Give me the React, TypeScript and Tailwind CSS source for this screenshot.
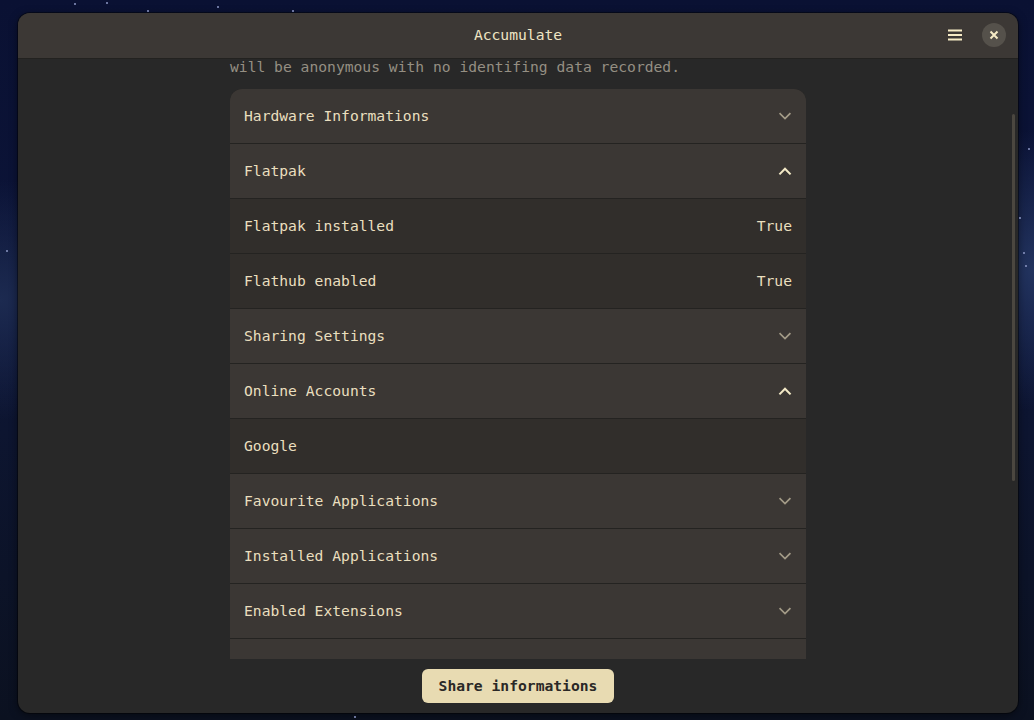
import React from 'react';

const mono = { fontFamily: '"DejaVu Sans Mono", "Liberation Mono", monospace' };

type Row =
  | { kind: 'group'; label: string; open: boolean }
  | { kind: 'item'; label: string; value?: string };

const rows: Row[] = [
  { kind: 'group', label: 'Hardware Informations', open: false },
  { kind: 'group', label: 'Flatpak', open: true },
  { kind: 'item', label: 'Flatpak installed', value: 'True' },
  { kind: 'item', label: 'Flathub enabled', value: 'True' },
  { kind: 'group', label: 'Sharing Settings', open: false },
  { kind: 'group', label: 'Online Accounts', open: true },
  { kind: 'item', label: 'Google' },
  { kind: 'group', label: 'Favourite Applications', open: false },
  { kind: 'group', label: 'Installed Applications', open: false },
  { kind: 'group', label: 'Enabled Extensions', open: false },
  { kind: 'group', label: '', open: false },
];

const stars = [
  { x: 74, y: 3 }, { x: 106, y: 2 }, { x: 147, y: 10 }, { x: 217, y: 6 }, { x: 292, y: 10 },
  { x: 1019, y: 217 }, { x: 1023, y: 252 }, { x: 1025, y: 265 }, { x: 1028, y: 148 },
  { x: 354, y: 716 }, { x: 6, y: 250 },
];

const Chevron = ({ up }: { up: boolean }) => (
  <svg width="14" height="14" viewBox="0 0 16 16" className={up ? 'text-[#f3e9c6]' : 'text-[#a39b87]'}>
    {up ? (
      <path d="M2.5 11 L8 5.5 L13.5 11" fill="none" stroke="currentColor" strokeWidth="2.4" strokeLinecap="square" />
    ) : (
      <path d="M2.5 5.5 L8 11 L13.5 5.5" fill="none" stroke="currentColor" strokeWidth="2" strokeLinecap="square" />
    )}
  </svg>
);

export default function App() {
  return (
    <div
      className="relative w-[1034px] h-[720px] overflow-hidden"
      style={{
        ...mono,
        background:
          'radial-gradient(ellipse 180px 140px at 1034px 270px, #22335e 0%, rgba(20,30,70,0) 100%), radial-gradient(ellipse 160px 120px at 0px 300px, #1c2a50 0%, rgba(20,30,70,0) 100%), linear-gradient(180deg, #0a1133 0%, #0c1438 40%, #0d1530 60%, #0b1120 100%)',
      }}
    >
      {stars.map((s, i) => (
        <div key={i} className="absolute w-[2px] h-[2px] rounded-full bg-[#8d97c4]" style={{ left: s.x, top: s.y }} />
      ))}

      <div className="p-[13px_16px_7px_18px] h-full">
        <div className="flex flex-col h-[700px] w-[1000px] rounded-[12px] overflow-hidden bg-[#282828] shadow-[0_2px_8px_rgba(0,0,0,0.5)] ring-1 ring-black/40">
          {/* header bar */}
          <div className="relative flex items-center justify-center h-[46px] shrink-0 bg-[#3c3835] border-b border-[#232220]">
            <span className="text-[14.67px] text-[#efe5c4] -mt-[2px]">Accumulate</span>
            <div className="absolute right-[12px] top-0 h-full flex items-center gap-[19px]">
              <svg width="16" height="14" viewBox="0 0 16 14" className="text-[#f6ebc6] -mt-[1px]">
                <rect x="1" y="1.5" width="14" height="2" fill="currentColor" />
                <rect x="1" y="6" width="14" height="2" fill="currentColor" />
                <rect x="1" y="10.5" width="14" height="2" fill="currentColor" />
              </svg>
              <div className="w-[24px] h-[24px] rounded-full bg-[#55514b] flex items-center justify-center -mt-[1px]">
                <svg width="10" height="10" viewBox="0 0 10 10">
                  <path d="M1.5 1.5 L8.5 8.5 M8.5 1.5 L1.5 8.5" stroke="#f6ebc6" strokeWidth="2" />
                </svg>
              </div>
            </div>
          </div>

          {/* scrolled content */}
          <div className="relative flex-1 overflow-hidden">
            <div className="w-[576px] mx-auto -mt-[2px]">
              <p className="text-[14.67px] leading-[20px] text-[#958f83] mb-[12px]">
                will be anonymous with no identifing data recorded.
              </p>
              <div className="rounded-t-[12px] overflow-hidden bg-[#242321] flex flex-col gap-px">
                {rows.map((r, i) =>
                  r.kind === 'group' ? (
                    <div key={i} className="h-[54px] bg-[#3b3734] flex items-center justify-between pl-[14px] pr-[14px]">
                      <span className="text-[14.67px] text-[#eadfbf]">{r.label}</span>
                      <Chevron up={r.open} />
                    </div>
                  ) : (
                    <div key={i} className="h-[54px] bg-[#312e2b] flex items-center justify-between pl-[14px] pr-[14px]">
                      <span className="text-[14.67px] text-[#eadfbf]">{r.label}</span>
                      {r.value && <span className="text-[14.67px] text-[#eadfbf]">{r.value}</span>}
                    </div>
                  )
                )}
              </div>
            </div>
            <div className="absolute right-[3px] top-[55px] w-[3px] h-[367px] rounded-full bg-[#4b4740]" />
          </div>

          {/* bottom bar */}
          <div className="h-[54px] shrink-0 flex items-start justify-center pt-[10px]">
            <button className="h-[34px] px-[17px] rounded-[6px] bg-[#e8dbb2] text-[14.67px] font-bold text-[#2a2826]">
              Share informations
            </button>
          </div>
        </div>
      </div>
    </div>
  );
}
